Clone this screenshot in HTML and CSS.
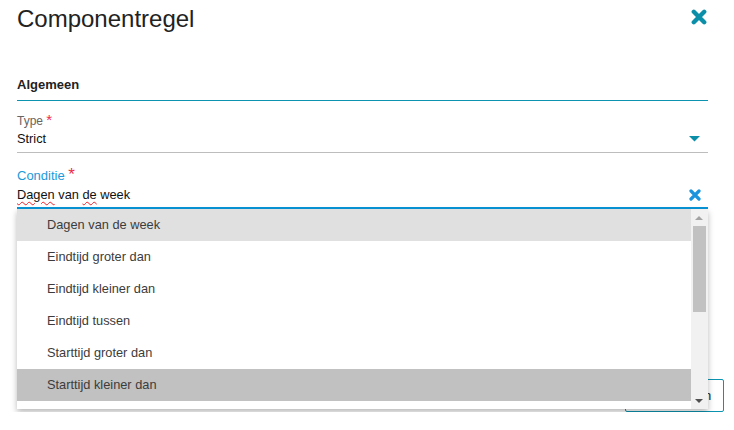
FILE: index.html
```html
<!DOCTYPE html>
<html lang="nl">
  <head>
    <meta charset="UTF-8" />
    <meta name="viewport" content="width=device-width, initial-scale=1.0" />
    <title>Componentregel</title>
    <link rel="stylesheet" href="styles.css">
  </head>
  <body>
    <div class="dialog">
      <div class="header">
        <h1 class="title">Componentregel</h1>
        <svg class="close" width="16" height="16" viewBox="0 0 16 16">
          <path d="M2.8 2.8 L13.2 13.2 M13.2 2.8 L2.8 13.2" />
        </svg>
      </div>

      <h2 class="section">Algemeen</h2>

      <div class="field">
        <label class="label">Type <span class="req">*</span></label>
        <div class="value">
          <span>Strict</span>
          <svg class="caret" width="11" height="6" viewBox="0 0 11 6">
            <path d="M0 0 H11 L5.5 5.5 Z" />
          </svg>
        </div>
      </div>

      <div class="field field-focus">
        <label class="label">Conditie <span class="req">*</span></label>
        <div class="value">
          <span><span class="typo">Dagen</span> van <span class="typo">de</span> week</span>
          <svg class="clear" width="12" height="12" viewBox="0 0 12 12">
            <path d="M2 2 L10 10 M10 2 L2 10" />
          </svg>
        </div>

        <!-- open keuzelijst ligt over de rest van het formulier -->
        <div class="dropdown">
          <ul class="options">
            <li class="hover">Dagen van de week</li>
            <li>Eindtijd groter dan</li>
            <li>Eindtijd kleiner dan</li>
            <li>Eindtijd tussen</li>
            <li>Starttijd groter dan</li>
            <li class="active">Starttijd kleiner dan</li>
          </ul>
          <div class="scrollbar">
            <span class="arrow-up"></span>
            <span class="thumb"></span>
            <span class="arrow-down"></span>
          </div>
        </div>
      </div>

      <div class="footer">
        <button class="btn">Toevoegen</button>
      </div>
    </div>
  </body>
</html>
```

FILE: styles.css
```css
* {
  margin: 0;
  padding: 0;
  box-sizing: border-box;
}
body {
  font-family: "Liberation Sans", Arial, sans-serif;
  color: #222;
  background: #fff;
}
.dialog {
  width: 691px;
  margin-left: 17px;
}
.header {
  display: flex;
  justify-content: space-between;
  align-items: flex-start;
  padding-top: 5px;
}
.title {
  font-size: 24px;
  font-weight: normal;
  line-height: 28px;
  color: #222;
}
.close {
  margin-top: 4px;
  margin-right: 1px;
  fill: none;
  stroke: #0b8fa9;
  stroke-width: 4.4;
  stroke-linecap: round;
}
.section {
  margin-top: 44px;
  padding-bottom: 7px;
  font-size: 13px;
  font-weight: bold;
  line-height: 16px;
  color: #222;
  border-bottom: 1px solid #0b93b0;
}
.field {
  position: relative;
  margin-top: 12px;
  padding-bottom: 4px;
  border-bottom: 1px solid #bdbdbd;
}
.label {
  display: block;
  font-size: 12px;
  line-height: 16px;
  color: #6b6360;
}
.req {
  color: #f02a4c;
  font-size: 15px;
  line-height: 0;
}
.value {
  display: flex;
  justify-content: space-between;
  align-items: center;
  margin-top: 1px;
  font-size: 12.8px;
  line-height: 18px;
  color: #111;
}
.caret {
  margin-right: 8px;
  fill: #0b8fa9;
}
.field-focus {
  margin-top: 15px;
  padding-bottom: 3px;
  border-bottom: 2px solid #0895d8;
}
.field-focus .label {
  font-size: 13px;
  color: #1a9ad9;
}
.field-focus .req {
  font-size: 17px;
}
.field-focus .value {
  margin-top: 2px;
}
.typo {
  text-decoration: underline wavy #e8202a;
  text-decoration-thickness: 1px;
  text-underline-offset: 2px;
}
.clear {
  margin-right: 7px;
  fill: none;
  stroke: #1a93dc;
  stroke-width: 3.2;
  stroke-linecap: round;
}
.dropdown {
  position: absolute;
  top: 100%;
  left: 0;
  right: 0;
  margin-top: 2px;
  height: 200px;
  display: flex;
  background: #fff;
  box-shadow: 0 3px 6px rgba(0, 0, 0, 0.28);
  z-index: 2;
}
.options {
  flex: 1;
  list-style: none;
}
.options li {
  height: 32px;
  line-height: 32px;
  padding-left: 30px;
  font-size: 12.8px;
  color: #3c3c3c;
}
.options li.hover {
  background: #e0e0e0;
}
.options li.active {
  background: #c1c1c1;
}
.scrollbar {
  position: relative;
  width: 17px;
  background: #f1f1f1;
}
.arrow-up,
.arrow-down {
  position: absolute;
  left: 4px;
  width: 0;
  height: 0;
  border-left: 4.5px solid transparent;
  border-right: 4.5px solid transparent;
}
.arrow-up {
  top: 7px;
  border-bottom: 4px solid #a3a3a3;
}
.arrow-down {
  bottom: 6px;
  border-top: 4px solid #505050;
}
.thumb {
  position: absolute;
  top: 17px;
  left: 2px;
  width: 13px;
  height: 86px;
  background: #c1c1c1;
}
.footer {
  display: flex;
  justify-content: flex-end;
  margin-top: 170px;
  margin-right: -16px;
}
.btn {
  width: 99px;
  height: 33px;
  padding-left: 10px;
  font-family: "Liberation Sans", Arial, sans-serif;
  font-size: 13px;
  color: #222;
  background: #fff;
  border: 1px solid #0b93b0;
  border-radius: 2px;
}
```
